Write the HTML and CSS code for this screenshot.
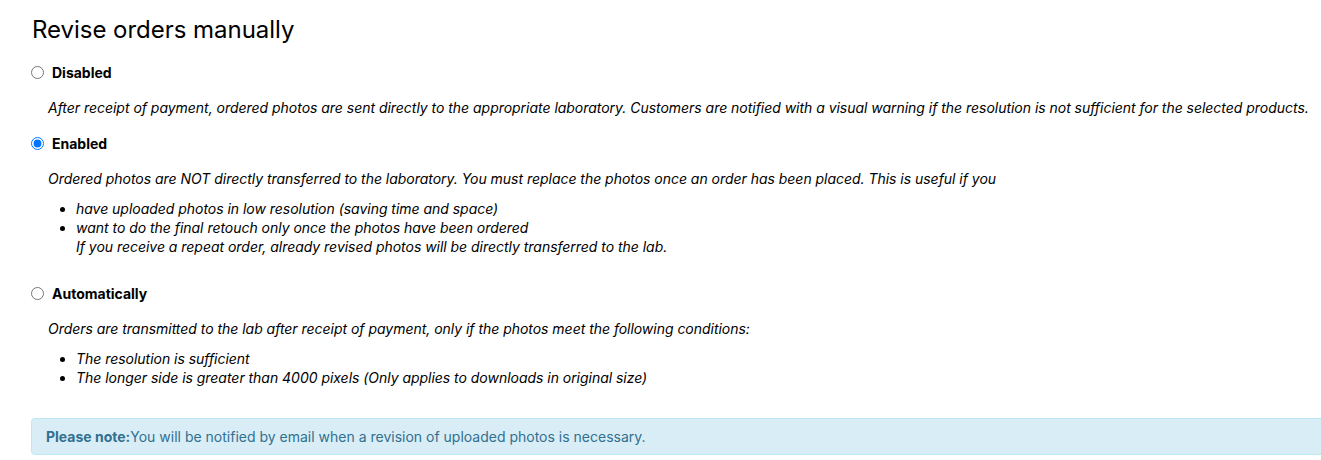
FILE: index.html
```html
<!DOCTYPE html>
<html lang="en">
<head>
<meta charset="utf-8">
<title>Revise orders manually</title>
<link rel="stylesheet" href="styles.css">
</head>
<body>
<div class="page">
  <h3 class="title">Revise orders manually</h3>

  <div class="option">
    <label class="radio-label"><input type="radio" name="revise" class="radio"> <span>Disabled</span></label>
    <div class="desc">
      <p>After receipt of payment, ordered photos are sent directly to the appropriate laboratory. Customers are notified with a visual warning if the resolution is not sufficient for the selected products.</p>
    </div>
  </div>

  <div class="option">
    <label class="radio-label"><input type="radio" name="revise" class="radio" checked> <span>Enabled</span></label>
    <div class="desc">
      <p>Ordered photos are NOT directly transferred to the laboratory. You must replace the photos once an order has been placed. This is useful if you</p>
      <ul class="list">
        <li>have uploaded photos in low resolution (saving time and space)</li>
        <li>want to do the final retouch only once the photos have been ordered<br>If you receive a repeat order, already revised photos will be directly transferred to the lab.</li>
      </ul>
    </div>
  </div>

  <div class="option">
    <label class="radio-label"><input type="radio" name="revise" class="radio"> <span>Automatically</span></label>
    <div class="desc">
      <p>Orders are transmitted to the lab after receipt of payment, only if the photos meet the following conditions:</p>
      <ul class="list">
        <li>The resolution is sufficient</li>
        <li>The longer side is greater than 4000 pixels (Only applies to downloads in original size)</li>
      </ul>
    </div>
  </div>

  <div class="alert"><strong>Please note:</strong>You will be notified by email when a revision of uploaded photos is necessary.</div>
</div>
</body>
</html>
```

FILE: styles.css
```css
html, body {
  margin: 0;
  padding: 0;
  background: #fff;
  overflow: hidden;
}
body {
  font-family: Inter, "Liberation Sans", sans-serif;
  font-size: 14px;
  line-height: 19px;
  color: #000;
}
.page {
  padding: 15px 0 0 31px;
  width: 1320px;
}
.title {
  margin: 0 0 0 1px;
  font-size: 24px;
  font-weight: 400;
  line-height: 30px;
  letter-spacing: -0.03px;
}
.option {
  margin-top: 17px;
}
.option + .option {
  margin-top: 16px;
}
.radio-label {
  display: flex;
  align-items: center;
  gap: 8px;
  font-weight: 700;
  height: 20px;
}
.radio {
  margin: 0;
  width: 13px;
  height: 13px;
  accent-color: #0075ff;
}
.desc {
  padding-left: 17px;
  font-style: italic;
  letter-spacing: -0.03px;
}
.desc p {
  margin: 16px 0 0 0;
}
.list {
  margin: 11px 0 0 0;
  padding-left: 28px;
}
.option:nth-of-type(2) .list {
  margin-bottom: 27px;
}
.alert {
  margin-top: 31px;
  padding: 8px 14px;
  background: #d9edf7;
  border: 1px solid #bce8f1;
  border-radius: 4px;
  color: #31708f;
  width: 1320px;
}
.alert strong {
  font-weight: 700;
}
```
